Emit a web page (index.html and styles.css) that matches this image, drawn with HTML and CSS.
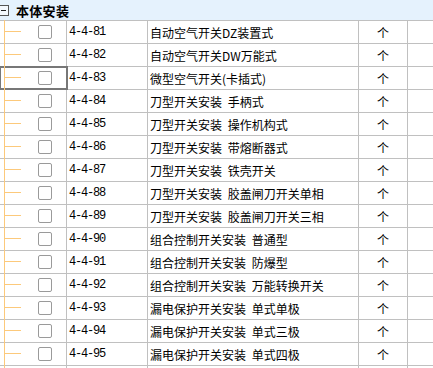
FILE: index.html
```html
<!DOCTYPE html>
<html lang="zh-CN">
<head>
    <meta charset="UTF-8">
    <title>本体安装</title>
    <link rel="stylesheet" href="styles.css">
</head>
<body>
    <div class="grid">
        <!-- group header -->
        <div class="group">
            <span class="toggle"></span>
            <span class="group-title">本体安装</span>
        </div>

        <div class="row"><div class="tree"><span class="check"></span></div><div class="code">4-4-81</div><div class="name">自动空气开关DZ装置式</div><div class="unit">个</div><div class="extra"></div></div>
        <div class="row"><div class="tree"><span class="check"></span></div><div class="code">4-4-82</div><div class="name">自动空气开关DW万能式</div><div class="unit">个</div><div class="extra"></div></div>
        <div class="row"><div class="tree focus"><span class="check"></span></div><div class="code">4-4-83</div><div class="name">微型空气开关(卡插式)</div><div class="unit">个</div><div class="extra"></div></div>
        <div class="row"><div class="tree"><span class="check"></span></div><div class="code">4-4-84</div><div class="name">刀型开关安装 手柄式</div><div class="unit">个</div><div class="extra"></div></div>
        <div class="row"><div class="tree"><span class="check"></span></div><div class="code">4-4-85</div><div class="name">刀型开关安装 操作机构式</div><div class="unit">个</div><div class="extra"></div></div>
        <div class="row"><div class="tree"><span class="check"></span></div><div class="code">4-4-86</div><div class="name">刀型开关安装 带熔断器式</div><div class="unit">个</div><div class="extra"></div></div>
        <div class="row"><div class="tree"><span class="check"></span></div><div class="code">4-4-87</div><div class="name">刀型开关安装 铁壳开关</div><div class="unit">个</div><div class="extra"></div></div>
        <div class="row"><div class="tree"><span class="check"></span></div><div class="code">4-4-88</div><div class="name">刀型开关安装 胶盖闸刀开关单相</div><div class="unit">个</div><div class="extra"></div></div>
        <div class="row"><div class="tree"><span class="check"></span></div><div class="code">4-4-89</div><div class="name">刀型开关安装 胶盖闸刀开关三相</div><div class="unit">个</div><div class="extra"></div></div>
        <div class="row"><div class="tree"><span class="check"></span></div><div class="code">4-4-90</div><div class="name">组合控制开关安装 普通型</div><div class="unit">个</div><div class="extra"></div></div>
        <div class="row"><div class="tree"><span class="check"></span></div><div class="code">4-4-91</div><div class="name">组合控制开关安装 防爆型</div><div class="unit">个</div><div class="extra"></div></div>
        <div class="row"><div class="tree"><span class="check"></span></div><div class="code">4-4-92</div><div class="name">组合控制开关安装 万能转换开关</div><div class="unit">个</div><div class="extra"></div></div>
        <div class="row"><div class="tree"><span class="check"></span></div><div class="code">4-4-93</div><div class="name">漏电保护开关安装 单式单极</div><div class="unit">个</div><div class="extra"></div></div>
        <div class="row"><div class="tree"><span class="check"></span></div><div class="code">4-4-94</div><div class="name">漏电保护开关安装 单式三极</div><div class="unit">个</div><div class="extra"></div></div>
        <div class="row"><div class="tree"><span class="check"></span></div><div class="code">4-4-95</div><div class="name">漏电保护开关安装 单式四极</div><div class="unit">个</div><div class="extra"></div></div>
        <!-- next row, only its top edge is in view -->
        <div class="row"><div class="tree"></div><div class="code"></div><div class="name"></div><div class="unit"></div><div class="extra"></div></div>
    </div>
</body>
</html>
```

FILE: styles.css
```css
html, body {
    margin: 0;
    height: 100%;
    overflow: hidden;
    background: #fff;
}
body {
    font-family: "Noto Sans CJK SC", "Liberation Sans", sans-serif;
    font-size: 12px;
    color: #000;
}
.grid {
    width: 433px;
}
.group {
    height: 20px;
    background: #e5f2fd;
    border-bottom: 1px solid #c0c0c0;
    display: flex;
    align-items: center;
}
.toggle {
    position: relative;
    box-sizing: border-box;
    width: 11px;
    height: 11px;
    margin-left: -2px;
    border: 1px solid #555;
    background: #f4f9fe;
}
.toggle::after {
    content: "";
    position: absolute;
    left: 2px;
    right: 2px;
    top: 4px;
    height: 1px;
    background: #222;
}
.group-title {
    margin-left: 7px;
    font-size: 13px;
    font-weight: bold;
    letter-spacing: 0.3px;
}
.row {
    display: grid;
    grid-template-columns: 67px 81px 211px 49px 1fr;
    height: 22px;
    border-bottom: 1px solid #c0c0c0;
}
.row > div {
    box-sizing: border-box;
    border-right: 1px solid #c0c0c0;
    display: flex;
    align-items: center;
    white-space: nowrap;
    overflow: hidden;
}
.row > .extra {
    border-right: none;
}
/* tree connector: trunk plus a short branch per item */
.tree {
    position: relative;
    overflow: visible !important;
}
.tree::before {
    content: "";
    position: absolute;
    left: 4px;
    top: -1px;
    bottom: -1px;
    width: 1px;
    background: #fcc97b;
    z-index: 1;
}
.tree::after {
    content: "";
    position: absolute;
    left: 4px;
    top: 10px;
    width: 17px;
    height: 1px;
    background: #fcc97b;
}
.focus {
    outline: 2px solid #777;
    outline-offset: -1px;
    z-index: 2;
}
.check {
    box-sizing: border-box;
    width: 14px;
    height: 14px;
    margin-left: 38px;
    border: 1px solid #9a9a9a;
    border-radius: 2px;
    background: #fff;
}
.code {
    padding-left: 2px;
    font-family: "Liberation Mono", monospace;
    font-size: 12px;
    letter-spacing: -1.2px;
}
.name {
    padding-left: 2px;
    word-spacing: 3px;
}
.unit {
    justify-content: center;
}
```
